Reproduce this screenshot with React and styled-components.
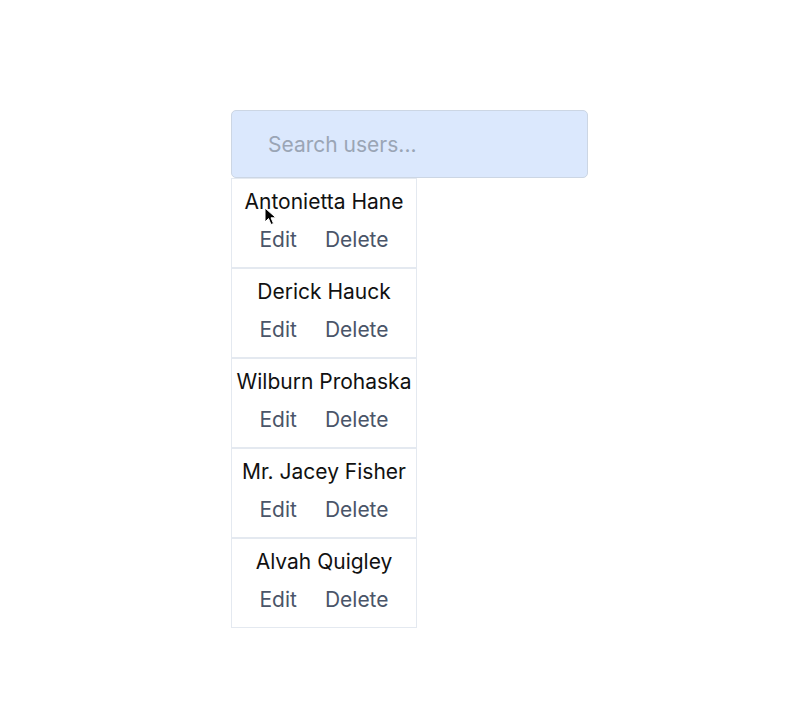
import React from 'react'
import styled, { createGlobalStyle } from 'styled-components'

const GlobalStyle = createGlobalStyle`
  body {
    margin: 0;
    background: #ffffff;
    font-family: Inter, "Liberation Sans", Arial, sans-serif;
  }
`

const users = [
  'Antonietta Hane',
  'Derick Hauck',
  'Wilburn Prohaska',
  'Mr. Jacey Fisher',
  'Alvah Quigley',
]

const Page = styled.div`
  position: relative;
  min-height: 714px;
  padding: 110px 0 0 231px;
  box-sizing: border-box;
`

const Finder = styled.div`
  display: flex;
  flex-direction: column;
  align-items: flex-start;
  width: 357px;
`

const SearchInput = styled.input`
  width: 100%;
  height: 68px;
  box-sizing: border-box;
  padding: 0 16px 0 36px;
  border: 1px solid #ccd6e4;
  border-radius: 5px;
  background: #dbe8fd;
  font-family: inherit;
  font-size: 21px;
  color: #2d3748;
  outline: none;

  &::placeholder {
    color: #9aa5b5;
  }
`

const List = styled.ul`
  list-style: none;
  margin: 0;
  padding: 0;
  width: 186px;
`

const Item = styled.li`
  display: flex;
  flex-direction: column;
  align-items: center;
  height: 90px;
  box-sizing: border-box;
  padding-top: 9px;
  border: 1px solid #e4e9f0;
`

const Name = styled.div`
  font-size: 21px;
  line-height: 28px;
  color: #111111;
  white-space: nowrap;
`

const Actions = styled.div`
  display: flex;
  margin-top: 10px;
`

const Action = styled.button`
  border: none;
  background: none;
  padding: 0 14px;
  font-family: inherit;
  font-size: 21px;
  line-height: 28px;
  color: #4a5568;
  cursor: pointer;
`

const Cursor = styled.svg`
  position: absolute;
  left: 264px;
  top: 207px;
  width: 14px;
  height: 20px;
  pointer-events: none;
`

export default function App() {
  return (
    <>
      <GlobalStyle />
      <Page>
        <Finder>
          <SearchInput type="text" placeholder="Search users..." />
          <List>
            {users.map(name => (
              <Item key={name}>
                <Name>{name}</Name>
                <Actions>
                  <Action>Edit</Action>
                  <Action>Delete</Action>
                </Actions>
              </Item>
            ))}
          </List>
        </Finder>
        <Cursor viewBox="0 0 14 20">
          <path d="M1 1 L1 15 L4.5 11.5 L7 17.5 L9.5 16.5 L7 10.8 L12 10.8 Z" fill="#000" stroke="#fff" strokeWidth="1" strokeLinejoin="round" />
        </Cursor>
      </Page>
    </>
  )
}
